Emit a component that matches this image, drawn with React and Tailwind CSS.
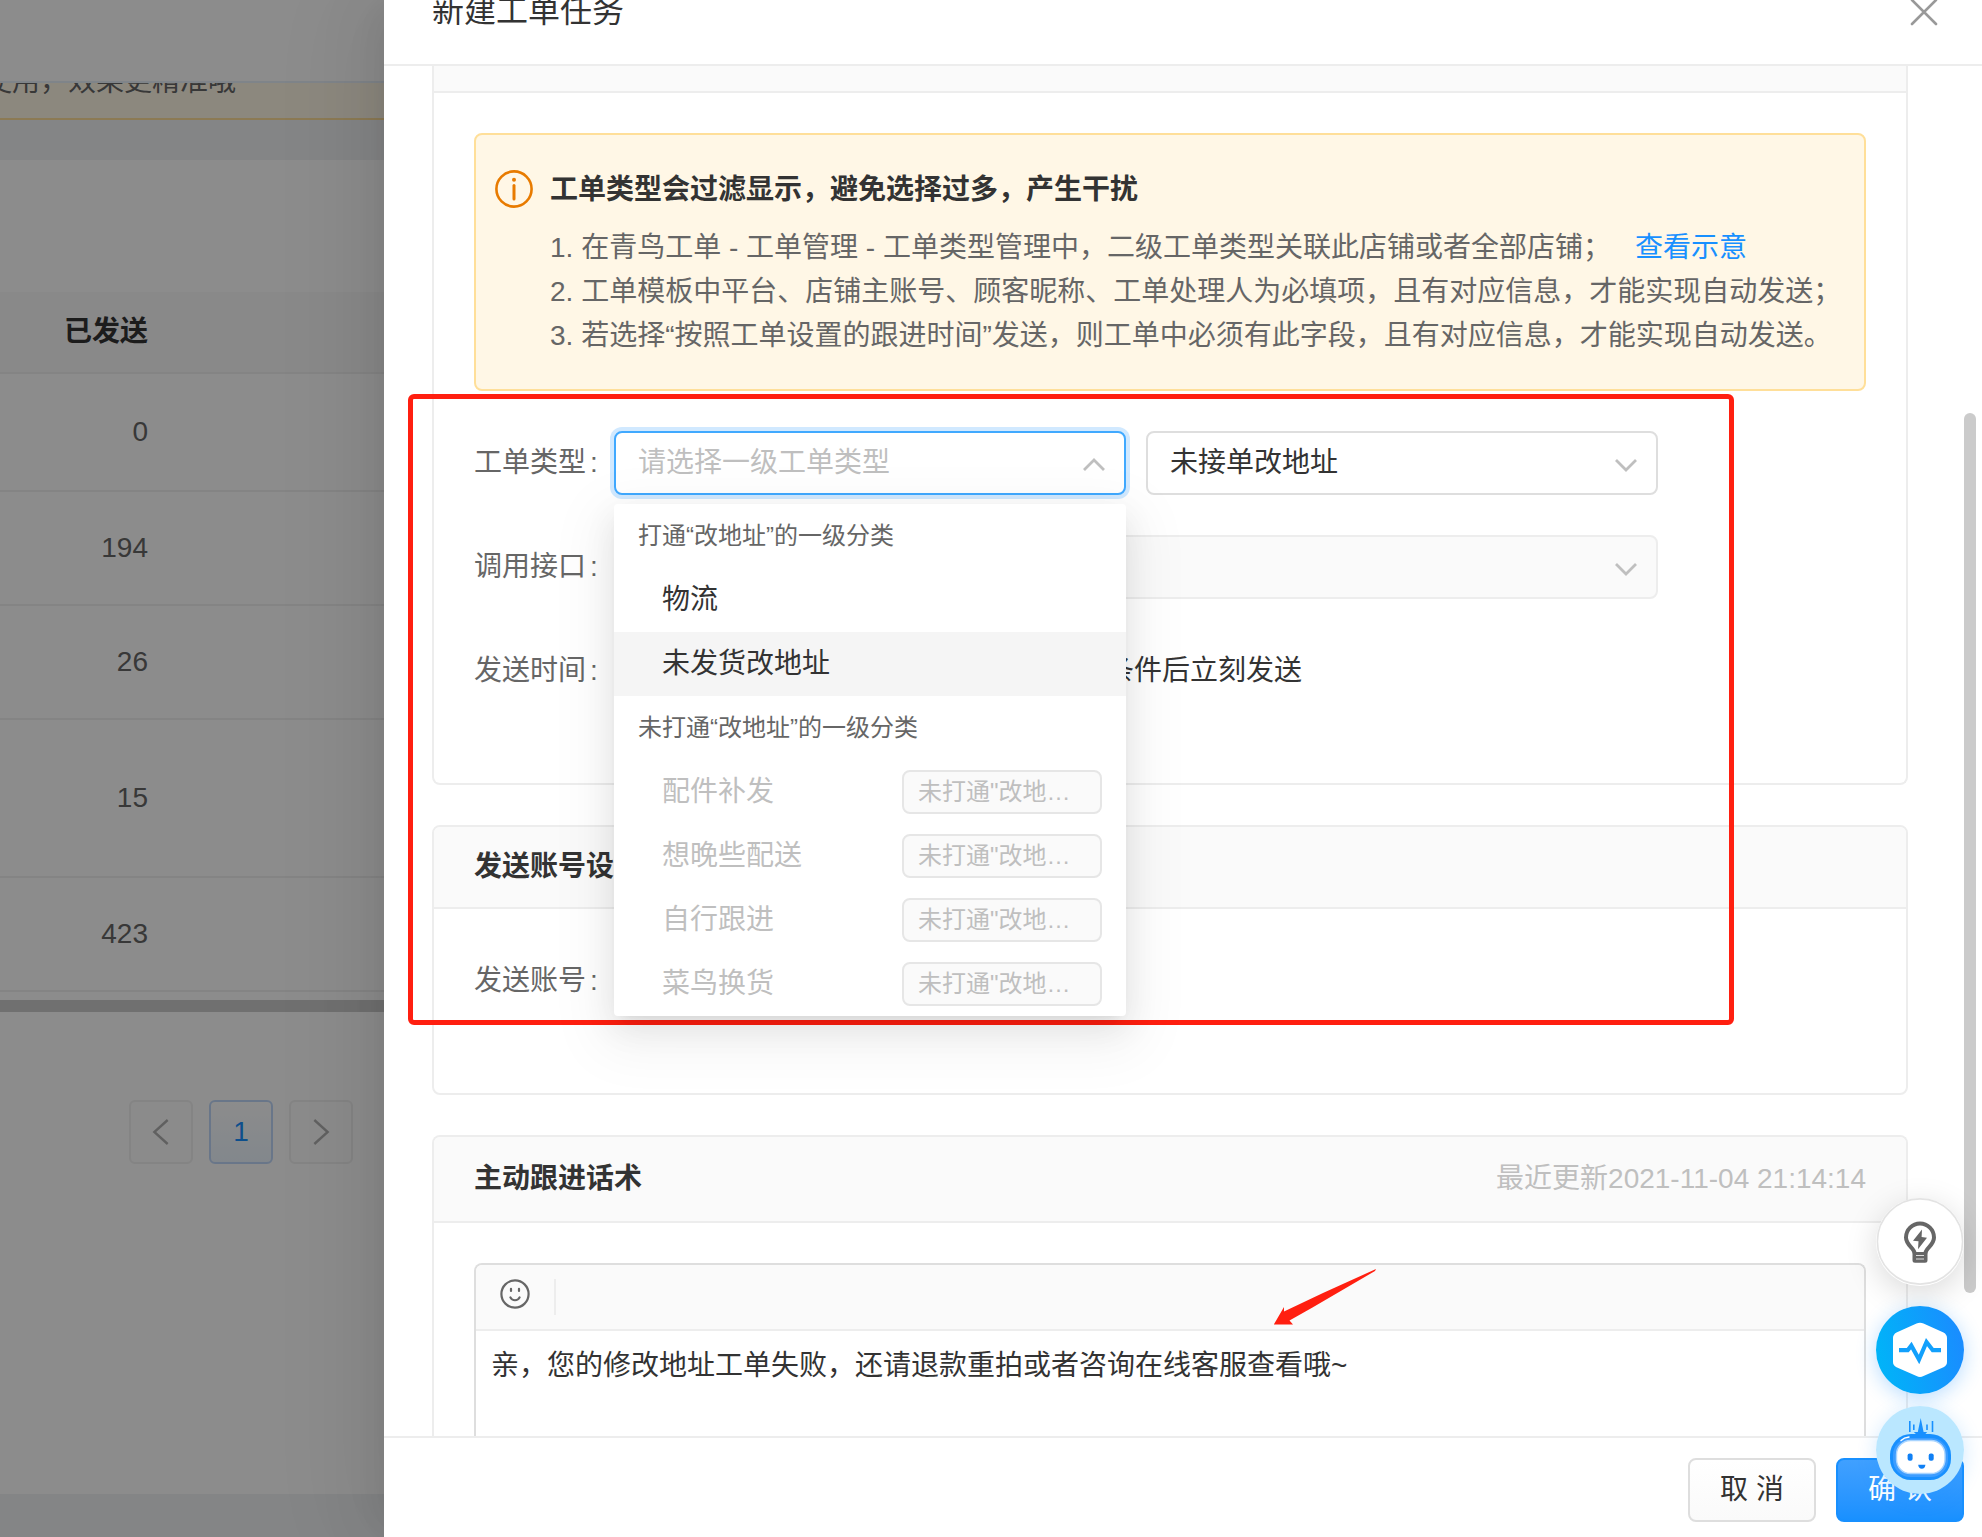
import React from "react";

const rows = [
  { value: "0", height: "h-[118px]" },
  { value: "194", height: "h-[114px]" },
  { value: "26", height: "h-[114px]" },
  { value: "15", height: "h-[158px]" },
  { value: "423", height: "h-[114px]" },
];

const disabledOptions = ["配件补发", "想晚些配送", "自行跟进", "菜鸟换货"];

function Chevron({ className, points }) {
  return (
    <svg viewBox="0 0 24 24" className={className} fill="none" stroke="currentColor" aria-hidden="true">
      <polyline points={points} />
    </svg>
  );
}

function BackgroundPage() {
  return (
    <div className="relative flex w-[384px] shrink-0 flex-col overflow-hidden bg-white">
      <div className="h-[83px] shrink-0 border-b-2 border-[#e8f0fa] bg-white" />
      <div className="h-[37px] shrink-0 overflow-hidden border-b-2 border-[#ffdf99] bg-[#fff7e6]">
        <p className="-mt-[21px] w-[236px] whitespace-nowrap text-right text-[28px] leading-[40px] text-[#666] [direction:rtl]">
          <bdi>使用，效果更精准哦</bdi>
        </p>
      </div>
      <div className="h-10 shrink-0 bg-[#f0f2f5]" />
      <div className="h-[132px] shrink-0" />
      <table className="w-full shrink-0 border-collapse text-[28px]">
        <thead>
          <tr className="h-[81px] border-b-2 border-[#f0f0f0] bg-[#fafafa]">
            <th className="p-0 text-right font-bold text-[#333]">已发送</th>
            <th className="w-[236px]" />
          </tr>
        </thead>
        <tbody>
          {rows.map((r) => (
            <tr key={r.value} className={`${r.height} border-b-2 border-[#f0f0f0]`}>
              <td className="p-0 text-right text-[#666]">{r.value}</td>
              <td />
            </tr>
          ))}
        </tbody>
      </table>
      <div className="mt-2 h-3 shrink-0 bg-[#cdcdcd]" />
      <nav className="mt-[88px] flex shrink-0 gap-4 pl-[129px]">
        <button aria-label="上一页" className="flex size-16 items-center justify-center rounded-md border-2 border-[#f0f0f0] bg-[#fdfdfd] text-[#b0b0b0]">
          <Chevron className="size-8 stroke-[1.8]" points="17,3 7,12 17,21" />
        </button>
        <button className="size-16 rounded-md border-2 border-[#c0d8fa] bg-linear-to-b from-white to-[#edf6ff] text-[28px] text-[#1890ff]">
          1
        </button>
        <button aria-label="下一页" className="flex size-16 items-center justify-center rounded-md border-2 border-[#f0f0f0] bg-[#fdfdfd] text-[#b0b0b0]">
          <Chevron className="size-8 stroke-[1.8]" points="7,3 17,12 7,21" />
        </button>
      </nav>
      <div className="mt-auto h-[43px] shrink-0 bg-[#f0f2f5]" />
      <div className="absolute inset-0 bg-black/45" />
    </div>
  );
}

function FormRow({ label, htmlFor, children }) {
  return (
    <div className="flex h-16 items-center">
      <label htmlFor={htmlFor} className="flex w-[140px] shrink-0 text-[28px] text-[#666]">
        {label}
        <span className="ml-1">:</span>
      </label>
      {children}
    </div>
  );
}

function TypeDropdown() {
  return (
    <ul
      role="listbox"
      aria-label="工单类型选项"
      className="absolute left-0 top-[73px] z-10 w-full rounded bg-white text-[28px] leading-[64px] text-[#333] shadow-[0_6px_12px_-8px_rgba(0,0,0,0.12),0_12px_32px_0_rgba(0,0,0,0.08),0_18px_56px_16px_rgba(0,0,0,0.05)]"
    >
      <li className="h-16 px-6 text-[24px] text-[#666]">打通“改地址”的一级分类</li>
      <li role="option" aria-selected="false" className="h-16 pl-12 pr-6">物流</li>
      <li role="option" aria-selected="true" className="h-16 bg-[#f5f5f5] pl-12 pr-6">未发货改地址</li>
      <li className="h-16 px-6 text-[24px] text-[#666]">未打通“改地址”的一级分类</li>
      {disabledOptions.map((o) => (
        <li key={o} role="option" aria-selected="false" aria-disabled="true" className="flex h-16 items-center justify-between pl-12 pr-6 text-[#bfbfbf]">
          <span>{o}</span>
          <span className="h-11 w-[200px] rounded-lg border-2 border-[#e6e6e6] bg-[#fafafa] px-3.5 text-[24px] leading-[40px]">
            未打通"改地…
          </span>
        </li>
      ))}
    </ul>
  );
}

function Drawer() {
  return (
    <section
      role="dialog"
      aria-labelledby="drawer-title"
      className="relative flex min-w-0 flex-1 flex-col bg-white shadow-[-12px_0_32px_-16px_rgba(0,0,0,0.08),-18px_0_56px_0_rgba(0,0,0,0.05),-24px_0_96px_16px_rgba(0,0,0,0.03)]"
    >
      <header className="-mt-[42px] flex h-[108px] shrink-0 items-center justify-between border-b-2 border-[#ededed] pl-12 pr-[42px]">
        <h1 id="drawer-title" className="text-[32px] text-[#333]">新建工单任务</h1>
        <button aria-label="关闭" className="flex size-8 items-center justify-center text-[#999]">
          <svg viewBox="0 0 32 32" className="size-8" fill="none" stroke="currentColor" strokeWidth="2.6" strokeLinecap="round">
            <path d="M4 5L28 29M28 5L4 29" />
          </svg>
        </button>
      </header>

      <div className="relative flex min-h-0 flex-1 flex-col overflow-hidden pl-12 pr-[74px]">
        <div className="shrink-0 rounded-b-lg border-2 border-t-0 border-[#ededed]">
          <div className="h-[27px] border-b-2 border-[#ededed] bg-[#fafafa]" />
          <div className="p-10">
            <div className="flex h-[258px] rounded-lg border-2 border-[#ffdf99] bg-[#fff7e6] pl-[19px] pt-[33px]">
              <svg viewBox="0 0 38 38" className="mt-0.5 size-[38px] shrink-0" fill="none" stroke="#e87b00">
                <circle cx="19" cy="19" r="17.600" strokeWidth="2.600" />
                <path d="M19 15.500V29" strokeWidth="3" strokeLinecap="round" />
                <circle cx="19" cy="9.800" r="2" fill="#e87b00" stroke="none" />
              </svg>
              <div className="ml-[17px] whitespace-nowrap text-[28px] leading-[44px] text-[#666]">
                <h2 className="mb-3.5 font-bold text-[#333]">工单类型会过滤显示，避免选择过多，产生干扰</h2>
                <p>
                  1. 在青鸟工单 - 工单管理 - 工单类型管理中，二级工单类型关联此店铺或者全部店铺；
                  <a href="#example" className="ml-6 text-[#1890ff]">查看示意</a>
                </p>
                <p>2. 工单模板中平台、店铺主账号、顾客昵称、工单处理人为必填项，且有对应信息，才能实现自动发送；</p>
                <p>3. 若选择“按照工单设置的跟进时间”发送，则工单中必须有此字段，且有对应信息，才能实现自动发送。</p>
              </div>
            </div>

            <div className="mt-10 mb-10 flex flex-col gap-10">
              <FormRow label="工单类型" htmlFor="type-1">
                <div className="relative w-[512px]">
                  <select id="type-1" defaultValue="" className="block h-16 w-full appearance-none rounded-lg border-2 border-[#40a9ff] bg-white px-[22px] text-[28px] text-[#bfbfbf] shadow-[0_0_0_4px_rgba(24,144,255,0.2)] outline-none">
                    <option value="">请选择一级工单类型</option>
                  </select>
                  <Chevron className="absolute right-5 top-[22px] size-6 stroke-[2.8] text-[#bfbfbf]" points="2,17 12,7 22,17" />
                  <TypeDropdown />
                </div>
                <div className="relative ml-5 w-[512px]">
                  <select aria-label="二级工单类型" className="block h-16 w-full appearance-none rounded-lg border-2 border-[#dedede] bg-white px-[22px] text-[28px] text-[#333] outline-none">
                    <option>未接单改地址</option>
                  </select>
                  <Chevron className="absolute right-5 top-[22px] size-6 stroke-[2.8] text-[#bfbfbf]" points="2,7 12,17 22,7" />
                </div>
              </FormRow>
              <FormRow label="调用接口" htmlFor="api">
                <div className="relative w-[1044px]">
                  <select id="api" disabled className="block h-16 w-full appearance-none rounded-lg border-2 border-[#ededed] bg-[#fafafa] opacity-100" />
                  <Chevron className="absolute right-5 top-[22px] size-6 stroke-[2.8] text-[#bfbfbf]" points="2,7 12,17 22,7" />
                </div>
              </FormRow>
              <FormRow label="发送时间">
                <span className="ml-[492px] text-[28px] text-[#333]">条件后立刻发送</span>
              </FormRow>
            </div>
          </div>
        </div>

        <div className="mt-10 shrink-0 rounded-lg border-2 border-[#ededed]">
          <div className="flex h-[82px] items-center rounded-t-md border-b-2 border-[#ededed] bg-[#fafafa] px-10">
            <h2 className="text-[28px] font-bold text-[#333]">发送账号设置</h2>
          </div>
          <div className="px-10 pb-20 pt-10">
            <FormRow label="发送账号" />
          </div>
        </div>

        <div className="mt-10 shrink-0 rounded-t-lg border-2 border-b-0 border-[#ededed]">
          <div className="flex h-[86px] items-center justify-between rounded-t-md border-b-2 border-[#ededed] bg-[#fafafa] px-10 text-[28px]">
            <h2 className="font-bold text-[#333]">主动跟进话术</h2>
            <span className="text-[#bfbfbf]">最近更新2021-11-04 21:14:14</span>
          </div>
          <div className="px-10 pt-10">
            <div className="rounded-t-lg border-2 border-b-0 border-[#dedede]">
              <div className="flex h-[66px] items-start rounded-t-md border-b-2 border-[#ededed] bg-[#fafafa] pl-6 pt-3.5">
                <button aria-label="表情" className="text-[#666]">
                  <svg viewBox="0 0 30 30" className="size-[30px]" fill="none" stroke="currentColor" strokeWidth="2.200" strokeLinecap="round">
                    <circle cx="15" cy="15" r="13.600" />
                    <path d="M11 9.800V12M19 9.800V12M10.400 18.400C12.200 22.200 17.800 22.200 19.600 18.400" />
                  </svg>
                </button>
                <span className="ml-6 h-9 w-0.5 bg-[#ededed]" />
              </div>
              <textarea
                aria-label="话术内容"
                className="block h-[200px] w-full resize-none bg-white px-[15px] py-[13px] text-[28px] leading-[44px] text-[#333] outline-none"
                defaultValue="亲，您的修改地址工单失败，还请退款重拍或者咨询在线客服查看哦~"
              />
            </div>
          </div>
        </div>

        <div className="absolute right-1.5 top-[347px] h-[880px] w-3 rounded-full bg-[#cbcbcb]" />
      </div>

      <footer className="flex h-[101px] shrink-0 justify-end gap-5 border-t-2 border-[#ededed] pr-[18px] pt-5 text-[28px]">
        <button className="h-16 w-32 whitespace-pre rounded-lg border-2 border-[#dedede] bg-linear-to-b from-white to-[#fafafa] text-[#333]">取 消</button>
        <button className="h-16 w-32 whitespace-pre rounded-lg border-2 border-[#1890ff] bg-linear-to-b from-[#40a0ff] to-[#1890ff] text-white">确 认</button>
      </footer>
    </section>
  );
}

function FloatingTools() {
  return (
    <div className="absolute bottom-[43px] right-[18px] flex flex-col">
      <button aria-label="提示" className="rounded-full bg-white shadow-[0_8px_32px_rgba(0,0,0,0.15)]">
        <svg viewBox="0 0 88 88" className="size-[88px]">
          <circle cx="44" cy="43.500" r="42.600" fill="#fff" stroke="#e3e3e3" strokeWidth="1.600" />
          <path d="M38.600 55.500C38.600 50 30 47.500 30 39.500a14 14 0 0 1 28 0C58 47.500 49.400 50 49.400 55.500" fill="none" stroke="#666" strokeWidth="4" />
          <path d="M36.500 54h15v8.200a2.500 2.500 0 0 1-2.500 2.500H39a2.500 2.500 0 0 1-2.500-2.500Z" fill="#666" />
          <path d="M40 57.500h8M40 61h8" stroke="#ddd" strokeWidth="1.200" />
          <path d="M46 31.500L37 42.700L42.500 43.300L42 51.200L51 39.700L45.600 39Z" fill="#666" />
        </svg>
      </button>
      <button aria-label="监控" className="mt-5 rounded-full shadow-[0_4px_20px_rgba(24,144,255,0.3)]">
        <svg viewBox="0 0 88 88" className="size-[88px]">
          <defs>
            <linearGradient id="pulse" x1="0" x2="1" y1="0.600" y2="0.400">
              <stop offset="0" stopColor="#00b4f8" />
              <stop offset="1" stopColor="#1a8cff" />
            </linearGradient>
          </defs>
          <circle cx="44" cy="44" r="44" fill="url(#pulse)" />
          <path d="M40.500 17.500Q44 16 47.500 17.500L67.500 26.500Q71 28.500 71 32V56Q71 59.500 67.500 61.300L47.500 70Q44 71.800 40.500 70L20.500 61.300Q17 59.500 17 56V32Q17 28.500 20.500 26.500Z" fill="#fff" />
          <path d="M23 44.200H31.700L35.300 39.600L43 53.500L50.500 36L56.800 44.200H65" fill="none" stroke="#12a0fc" strokeWidth="4.200" />
        </svg>
      </button>
      <button aria-label="机器人" className="mt-3 rounded-full shadow-[0_4px_20px_rgba(24,144,255,0.2)]">
        <svg viewBox="0 0 88 88" className="size-[88px]">
          <circle cx="44" cy="44" r="44" fill="#bae7ff" />
          <g fill="#1890ff">
            <path d="M44.700 12L47.600 26H51Q50 29 44.700 29T38 26H41.800Z" />
            <path d="M33 15h1.600v11H33ZM37 18.500h1.600v5.500H37ZM50.200 18.500h1.600v5.500h-1.600ZM55.700 15h1.600v11h-1.600Z" />
            <rect x="14" y="28" width="61" height="46" rx="21" />
          </g>
          <rect x="17" y="32" width="55" height="39" rx="17" fill="#3d9dff" />
          <rect x="20.500" y="34.500" width="48.500" height="33" rx="14" fill="#fff" stroke="#a8d4ff" strokeWidth="1.400" />
          <path d="M25 34.500Q28 31.600 33 31" fill="none" stroke="#fff" strokeWidth="1.400" strokeLinecap="round" />
          <g fill="#1080f5">
            <rect x="31.600" y="47.500" width="5" height="7.200" rx="2" />
            <rect x="52.700" y="47.500" width="5" height="7.200" rx="2" />
            <path d="M42.200 58.700h7.200Q49 62.700 45.800 62.700T42.200 58.700Z" />
          </g>
        </svg>
      </button>
    </div>
  );
}

export default function App() {
  return (
    <main className="relative flex h-screen overflow-hidden bg-white font-['Liberation_Sans','Noto_Sans_CJK_SC',sans-serif]">
      <BackgroundPage />
      <Drawer />
      <FloatingTools />
      <div className="pointer-events-none absolute left-[408px] top-[394px] h-[631px] w-[1326px] rounded-md border-[5px] border-[#ff1f10]" />
      <svg viewBox="0 0 104 58" className="pointer-events-none absolute left-[1273px] top-[1268px] h-[58px] w-[104px]" fill="#ff1f10">
        <path d="M103 1L102 3L39.500 39.500L16.500 52.500L20 56.500H0.800L11 39V43.500L50 25Z" />
      </svg>
    </main>
  );
}
